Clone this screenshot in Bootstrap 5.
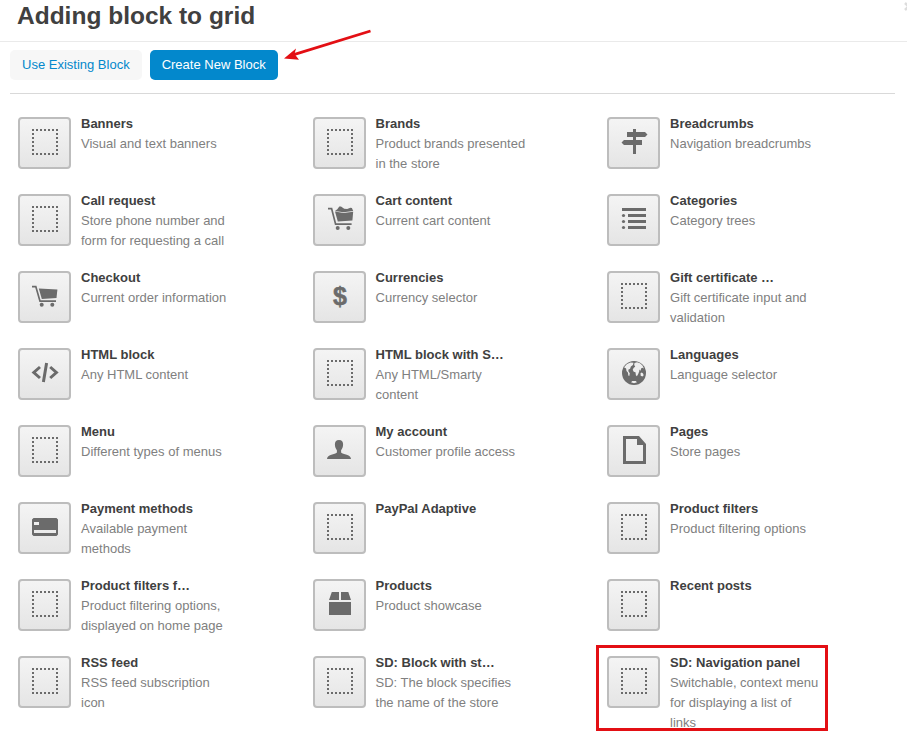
<!DOCTYPE html>
<html lang="en">
<head>
<meta charset="utf-8">
<meta name="viewport" content="width=device-width, initial-scale=1">
<title>Adding block to grid</title>
<link href="https://cdn.jsdelivr.net/npm/bootstrap@5.3.0/dist/css/bootstrap.min.css" rel="stylesheet">
<style>
body{font-family:"Liberation Sans",Arial,sans-serif;font-size:13px;line-height:20px;color:#404040;height:731px}
.dialog-head{height:42px;padding:1px 0 0 17px;border-bottom:1px solid #eaeaea}
.dialog-head h1{font-size:24.500px;line-height:30px}
.dialog-close{top:2px;right:0;width:3px;height:9px;overflow:hidden;color:#ddd}
.block-tabs{margin:8px 12px 0 10px;height:44px;border-bottom:1px solid #d9d9d9}
.block-tabs .nav-link{height:30px;padding:5px 12px;border-radius:5px;background:#f7f7f7;color:#0388cc}
.block-tabs .nav-link.active{background:#0388cc;color:#fff}
.block-grid{width:883.600px;margin:20px 0 0 10px}
.block-item{height:77px;padding-left:8px}
.tile{width:53px;height:52px;margin-top:3px;border:2px solid #bdbdbd;border-radius:4px;background:linear-gradient(#f4f4f4,#e5e5e5);color:#6b6b6b}
.tile svg{width:49px;height:48px;display:block}
.block-text{width:150px;margin-left:10px}
.block-text p{color:#808080}
.pointer{left:280px;top:26px}
.highlight{left:596px;top:645px;width:232px;height:86px;border:3px solid #e30f14}
</style>
<script src="https://cdn.jsdelivr.net/npm/bootstrap@5.3.0/dist/js/bootstrap.bundle.min.js"></script>
</head>
<body class="position-relative overflow-hidden">
<svg class="d-none">
<symbol id="dots" viewBox="0 0 49 48"><path d="M12 11H38M12 35H38M13 10V36M37 10V36" fill="none" stroke="currentColor" stroke-width="2" stroke-dasharray="2 2"/></symbol>
<symbol id="sign" viewBox="0 0 49 48"><path fill="currentColor" d="M24 10h3v3h9l2.500 2.500L36 18h-9v3h6v5h-6v9h-3v-9h-9l-2.500-2.500L15 21h9v-3h-6v-5h6z"/></symbol>
<symbol id="list" viewBox="0 0 49 48"><path fill="currentColor" d="M13 12h24v3H13zM19 18h18v3H19zM19 24h18v3H19zM19 30h18v3H19z"/><g fill="currentColor"><circle cx="14.500" cy="19.500" r="1.600"/><circle cx="14.500" cy="25.500" r="1.600"/><circle cx="14.500" cy="31.500" r="1.600"/></g></symbol>
<symbol id="cart" viewBox="0 0 49 48"><path fill="none" stroke="currentColor" stroke-width="1.700" d="M12 13.600h3.800L20 28.200h16"/><path fill="currentColor" d="M18.800 15.400l18.600 1-.9 8.500-14.700 1z"/><circle cx="21.700" cy="31.800" r="2" fill="currentColor"/><circle cx="32.300" cy="31.800" r="2" fill="currentColor"/></symbol>
<symbol id="cartfull" viewBox="0 0 49 48"><path fill="none" stroke="currentColor" stroke-width="1.700" d="M13 12.600h3.600L20.600 28.200h16"/><path fill="currentColor" d="M20 15.600l8.500 1.300 9.700-1.200-.8 8.700-14.600 1zM20 14.900l2.300-1.700 2-2.700h1.700l3.200 2.200 3 .4 3.200-1.300 1.500.3 1.300 2.800-9.700 1.300z"/><circle cx="22.700" cy="32" r="2" fill="currentColor"/><circle cx="33.300" cy="32" r="2" fill="currentColor"/></symbol>
<symbol id="code" viewBox="0 0 49 48"><path fill="none" stroke="currentColor" stroke-width="3" d="M20 17l-6.200 5.500 6.200 5.500M30.200 17l6.200 5.500-6.200 5.500M26.600 13l-3.200 19"/></symbol>
<symbol id="globe" viewBox="0 0 49 48"><circle cx="25" cy="23" r="12" fill="currentColor"/><path fill="#eee" d="M15 17.200l3-3.200 3.500-1.500 3 .2-.6 2.300-2 1.500-.8 2.300-1.800 1 .2 1.700 1.300 1.800-.5 2.700-1-.6-.3-2.700-1.500-1.800-.4-2.500zM25.500 13l2.500-.7 3 1 2.500 2.300 1.400 3-1.600-.8-1.200.8-.5 2.200-1.200-1.200-.2 2-1 2.500-1.300 2.200-1-1-.4-3-1.800-.5-1-2 1-2 1.500-1-1-1.800zM31.500 23.300l1.300-.8 1.200 1 .7 1.800-1.300 1.200-1.700-.7zM22 32.300l1.300-1.200h3.400l1.300 1.200-3 .9z"/></symbol>
<symbol id="page" viewBox="0 0 49 48"><path fill="currentColor" fill-rule="evenodd" d="M14 9h16l7 8v20H14zM17 12v22h17V18h-6v-6z"/></symbol>
<symbol id="person" viewBox="0 0 49 48"><path fill="currentColor" d="M24 13c3 0 4.200 2 4.100 4.600 0 2.600-.9 4.400-2 5.600v2.200c1 1.200 3.200 1.400 5.600 2.300 2.800 1 4.300 2.200 4.300 4.300H12c0-2.100 1.500-3.300 4.300-4.300 2.400-.9 4.600-1.100 5.600-2.300v-2.200c-1.100-1.200-2-3-2-5.600C19.800 15 21 13 24 13z"/></symbol>
<symbol id="payment" viewBox="0 0 49 48"><path fill="currentColor" fill-rule="evenodd" d="M13.500 14h23l1.500 1.500v15L36.500 32h-23L12 30.500v-15zM14 18v3h5v-3zM14 26v3h22v-3z"/></symbol>
<symbol id="box" viewBox="0 0 49 48"><path fill="currentColor" d="M14 21h22v13H14zM16.800 11H24v8H14zM26 11h7.300l2.700 8H26z"/></symbol>
</svg>

<header class="dialog-head position-relative">
<h1 class="fw-bold m-0">Adding block to grid</h1>
<svg class="dialog-close position-absolute" viewBox="0 0 3 9"><path d="M1 1l7 7M1 8l7-7" stroke="currentColor" stroke-width="2.500"/></svg>
</header>
<nav class="nav block-tabs gap-2">
<a class="nav-link" href="#">Use Existing Block</a>
<a class="nav-link active" href="#">Create New Block</a>
</nav>

<main class="row g-0 block-grid">
<div class="col-4 d-flex align-items-start block-item"><div class="tile flex-shrink-0"><svg><use href="#dots"/></svg></div><div class="block-text"><strong>Banners</strong><p class="m-0">Visual and text banners</p></div></div>
<div class="col-4 d-flex align-items-start block-item"><div class="tile flex-shrink-0"><svg><use href="#dots"/></svg></div><div class="block-text"><strong>Brands</strong><p class="m-0">Product brands presented in the store</p></div></div>
<div class="col-4 d-flex align-items-start block-item"><div class="tile flex-shrink-0"><svg><use href="#sign"/></svg></div><div class="block-text"><strong>Breadcrumbs</strong><p class="m-0">Navigation breadcrumbs</p></div></div>

<div class="col-4 d-flex align-items-start block-item"><div class="tile flex-shrink-0"><svg><use href="#dots"/></svg></div><div class="block-text"><strong>Call request</strong><p class="m-0">Store phone number and form for requesting a call</p></div></div>
<div class="col-4 d-flex align-items-start block-item"><div class="tile flex-shrink-0"><svg><use href="#cartfull"/></svg></div><div class="block-text"><strong>Cart content</strong><p class="m-0">Current cart content</p></div></div>
<div class="col-4 d-flex align-items-start block-item"><div class="tile flex-shrink-0"><svg><use href="#list"/></svg></div><div class="block-text"><strong>Categories</strong><p class="m-0">Category trees</p></div></div>

<div class="col-4 d-flex align-items-start block-item"><div class="tile flex-shrink-0"><svg><use href="#cart"/></svg></div><div class="block-text"><strong>Checkout</strong><p class="m-0">Current order information</p></div></div>
<div class="col-4 d-flex align-items-start block-item"><div class="tile flex-shrink-0"><svg viewBox="0 0 49 48"><text x="25" y="31.500" text-anchor="middle" font-size="25" font-weight="700" fill="currentColor" stroke="currentColor" stroke-width=".5">$</text></svg></div><div class="block-text"><strong>Currencies</strong><p class="m-0">Currency selector</p></div></div>
<div class="col-4 d-flex align-items-start block-item"><div class="tile flex-shrink-0"><svg><use href="#dots"/></svg></div><div class="block-text"><strong>Gift certificate …</strong><p class="m-0">Gift certificate input and validation</p></div></div>

<div class="col-4 d-flex align-items-start block-item"><div class="tile flex-shrink-0"><svg><use href="#code"/></svg></div><div class="block-text"><strong>HTML block</strong><p class="m-0">Any HTML content</p></div></div>
<div class="col-4 d-flex align-items-start block-item"><div class="tile flex-shrink-0"><svg><use href="#dots"/></svg></div><div class="block-text"><strong>HTML block with S…</strong><p class="m-0">Any HTML/Smarty content</p></div></div>
<div class="col-4 d-flex align-items-start block-item"><div class="tile flex-shrink-0"><svg><use href="#globe"/></svg></div><div class="block-text"><strong>Languages</strong><p class="m-0">Language selector</p></div></div>

<div class="col-4 d-flex align-items-start block-item"><div class="tile flex-shrink-0"><svg><use href="#dots"/></svg></div><div class="block-text"><strong>Menu</strong><p class="m-0">Different types of menus</p></div></div>
<div class="col-4 d-flex align-items-start block-item"><div class="tile flex-shrink-0"><svg><use href="#person"/></svg></div><div class="block-text"><strong>My account</strong><p class="m-0">Customer profile access</p></div></div>
<div class="col-4 d-flex align-items-start block-item"><div class="tile flex-shrink-0"><svg><use href="#page"/></svg></div><div class="block-text"><strong>Pages</strong><p class="m-0">Store pages</p></div></div>

<div class="col-4 d-flex align-items-start block-item"><div class="tile flex-shrink-0"><svg><use href="#payment"/></svg></div><div class="block-text"><strong>Payment methods</strong><p class="m-0">Available payment methods</p></div></div>
<div class="col-4 d-flex align-items-start block-item"><div class="tile flex-shrink-0"><svg><use href="#dots"/></svg></div><div class="block-text"><strong>PayPal Adaptive</strong></div></div>
<div class="col-4 d-flex align-items-start block-item"><div class="tile flex-shrink-0"><svg><use href="#dots"/></svg></div><div class="block-text"><strong>Product filters</strong><p class="m-0">Product filtering options</p></div></div>

<div class="col-4 d-flex align-items-start block-item"><div class="tile flex-shrink-0"><svg><use href="#dots"/></svg></div><div class="block-text"><strong>Product filters f…</strong><p class="m-0">Product filtering options, displayed on home page</p></div></div>
<div class="col-4 d-flex align-items-start block-item"><div class="tile flex-shrink-0"><svg><use href="#box"/></svg></div><div class="block-text"><strong>Products</strong><p class="m-0">Product showcase</p></div></div>
<div class="col-4 d-flex align-items-start block-item"><div class="tile flex-shrink-0"><svg><use href="#dots"/></svg></div><div class="block-text"><strong>Recent posts</strong></div></div>

<div class="col-4 d-flex align-items-start block-item"><div class="tile flex-shrink-0"><svg><use href="#dots"/></svg></div><div class="block-text"><strong>RSS feed</strong><p class="m-0">RSS feed subscription icon</p></div></div>
<div class="col-4 d-flex align-items-start block-item"><div class="tile flex-shrink-0"><svg><use href="#dots"/></svg></div><div class="block-text"><strong>SD: Block with st…</strong><p class="m-0">SD: The block specifies the name of the store</p></div></div>
<div class="col-4 d-flex align-items-start block-item"><div class="tile flex-shrink-0"><svg><use href="#dots"/></svg></div><div class="block-text"><strong>SD: Navigation panel</strong><p class="m-0">Switchable, context menu for displaying a list of links</p></div></div>
</main>

<svg class="position-absolute pointer" width="95" height="36"><path d="M90.500 5L13 28.800" stroke="#e30f14" stroke-width="2.800" fill="none"/><path d="M4 32.400L16 22.600l-1.500 5.400 4.500 5.700z" fill="#e30f14"/></svg>
<div class="position-absolute highlight"></div>
</body>
</html>
